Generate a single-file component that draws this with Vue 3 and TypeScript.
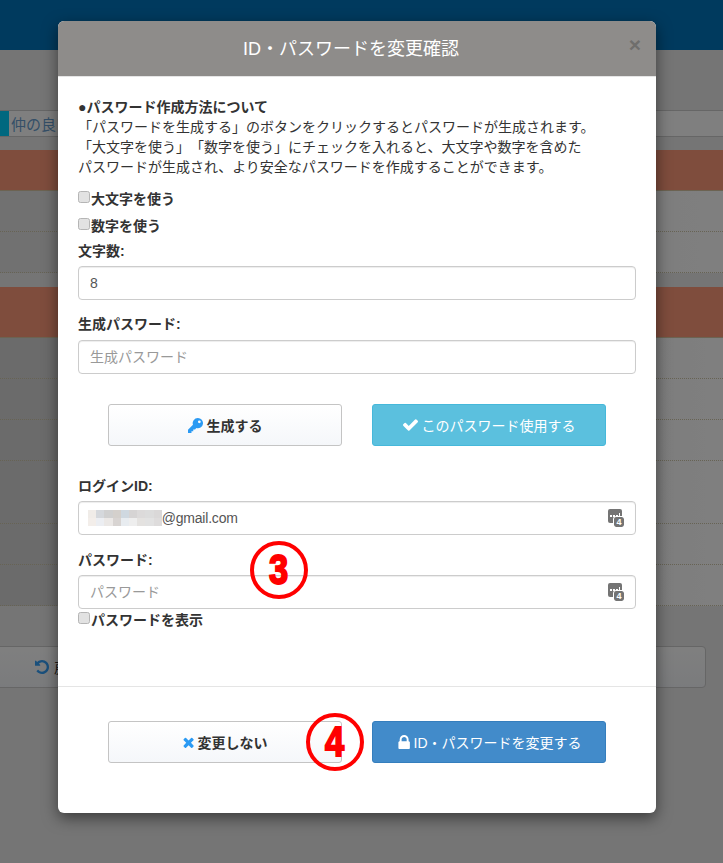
<script setup lang="ts">
const mosaic: string[] = [
  '#f0ece8','#d5d8dc','#d0d0d0','#d4d0cc','#cfd8e0','#d6d4d4','#dcdada','#dcdcdc','#dad8d8',
  '#f3eeea','#eceef2','#ebe8e6','#d8d4d2','#e8ecf0','#eeeeee','#e4e2e0','#e2e2e2','#dedcdc',
]
const rows = [41, 41]
const lowerRows = [41, 41, 41, 63, 41, 41]
const key = 'M10.5 0a5.5 5.5 0 1 1-1.6 10.76L7.5 12.2H5.6v1.9H3.7V16H0v-3.4l5.3-5.3A5.5 5.5 0 0 1 10.5 0zm1.6 2.6a1.5 1.5 0 1 0 0 3 1.5 1.5 0 0 0 0-3z'
const check = 'M1671 566q0 40-28 68l-724 724-136 136q-28 28-68 28t-68-28l-136-136-362-362q-28-28-28-68t28-68l136-136q28-28 68-28t68 28l294 295 656-657q28-28 68-28t68 28l136 136q28 28 28 68z'
const times = 'M1490 1322q0 40-28 68l-136 136q-28 28-68 28t-68-28l-294-294-294 294q-28 28-68 28t-68-28l-136-136q-28-28-28-68t28-68l294-294-294-294q-28-28-28-68t28-68l136-136q28-28 68-28t68 28l294 294 294-294q28-28 68-28t68 28l136 136q28 28 28 68t-28 68l-294 294 294 294q28 28 28 68z'
const lock = 'M640 768h512v-192q0-106-75-181t-181-75-181 75-75 181v192zm832 96v576q0 40-28 68t-68 28h-960q-40 0-68-28t-28-68v-576q0-40 28-68t68-28h32v-192q0-184 132-316t316-132 316 132 132 316v192h32q40 0 68 28t28 68z'
const undo = 'M1664 896q0 156-61 298t-164 245-245 164-298 61q-172 0-327-72.5t-264-204.5q-7-10-6.5-22.5t8.5-20.5l137-138q10-9 25-9 16 2 23 12 73 95 179 147t225 52q104 0 198.5-40.5t163.5-109.5 109.5-163.5 40.5-198.5-40.5-198.5-109.5-163.5-163.5-109.5-198.5-40.5q-98 0-188 35.5t-160 101.5l137 138q31 30 14 69-17 40-59 40h-448q-26 0-45-19t-19-45v-448q0-42 40-59 39-17 69 14l130 129q107-101 244.5-156.5t284.5-55.5q156 0 298 61t245 164 164 245 61 298z'
</script>

<template>
  <div class="page">
    <header class="topbar"></header>
    <main class="under">
      <div class="search">
        <span class="tab"></span>
        <span class="search-box">仲の良い</span>
      </div>
      <div class="band first"></div>
      <div v-for="(h, i) in rows" :key="'a' + i" class="row upper" :style="{ height: h + 'px' }"></div>
      <div class="band second"></div>
      <div v-for="(h, i) in lowerRows" :key="'b' + i" class="row lower" :style="{ height: h + 'px' }"></div>
      <div class="under-actions">
        <button class="under-btn">
          <svg class="undo" viewBox="128 128 1536 1536"><path :d="undo" /></svg>
          <span>戻る</span>
        </button>
      </div>
    </main>

    <div class="backdrop"></div>

    <section class="modal">
      <div class="modal-head">
        <h4>ID・パスワードを変更確認</h4>
        <span class="close">×</span>
      </div>

      <div class="modal-body">
        <div class="intro">
          <strong>●パスワード作成方法について</strong><br />
          「パスワードを生成する」のボタンをクリックするとパスワードが生成されます。<br />
          「大文字を使う」「数字を使う」にチェックを入れると、大文字や数字を含めた<br />
          パスワードが生成され、より安全なパスワードを作成することができます。
        </div>

        <label class="check first-check"><input type="checkbox" />大文字を使う</label>
        <label class="check second-check"><input type="checkbox" />数字を使う</label>

        <label class="label count-label">文字数:</label>
        <div class="field"><input class="input" type="text" value="8" /></div>

        <label class="label gen-label">生成パスワード:</label>
        <div class="field"><input class="input" type="text" placeholder="生成パスワード" /></div>

        <div class="actions gen-actions">
          <button class="btn plain">
            <svg class="ic key" viewBox="0 0 16 16"><path fill-rule="evenodd" :d="key" /></svg>
            生成する
          </button>
          <button class="btn info">
            <svg class="ic check-ic" viewBox="121 334 1550 1188"><path :d="check" /></svg>
            このパスワード使用する
          </button>
        </div>

        <label class="label id-label">ログインID:</label>
        <div class="field">
          <div class="input id-input">
            <span class="mosaic"><i v-for="(c, i) in mosaic" :key="i" :style="{ background: c }"></i></span><span class="mail">@gmail.com</span>
          </div>
          <span class="pm">
            <span class="pm-bubble"><i></i><i></i><i></i><i class="tall"></i></span>
            <span class="pm-badge">4</span>
          </span>
        </div>

        <label class="label pw-label">パスワード:</label>
        <div class="field">
          <input class="input" type="text" placeholder="パスワード" />
          <span class="pm">
            <span class="pm-bubble"><i></i><i></i><i></i><i class="tall"></i></span>
            <span class="pm-badge">4</span>
          </span>
        </div>
        <label class="check show-check"><input type="checkbox" />パスワードを表示</label>
      </div>

      <div class="modal-foot">
        <div class="actions">
          <button class="btn plain">
            <svg class="ic times-ic" viewBox="282 282 1208 1272"><path :d="times" /></svg>
            変更しない
          </button>
          <button class="btn primary">
            <svg class="ic lock-ic" viewBox="192 128 1280 1408"><path :d="lock" /></svg>
            ID・パスワードを変更する
          </button>
        </div>
      </div>
    </section>

    <div class="mark three"><span>3</span></div>
    <div class="mark four"><span>4</span></div>
  </div>
</template>

<style>
html, body { margin: 0; background: #ebebeb; }
</style>

<style scoped>
.page {
  position: relative;
  width: 723px;
  height: 863px;
  overflow: hidden;
  background: #ebebeb;
  font-family: "Liberation Sans", "Noto Sans CJK JP", sans-serif;
  font-size: 14px;
  color: #333;
  text-spacing-trim: space-all;
}
.topbar { height: 50px; background: #0075bd; }
.under { padding-top: 60px; }
.search {
  display: flex;
  height: 27px;
  margin-bottom: 13px;
  box-sizing: border-box;
  background: #fff;
  border-top: 1px solid #ccc;
  border-bottom: 1px solid #ccc;
}
.tab { width: 9px; background: #00d0ff; }
.search-box { padding-left: 2px; line-height: 27px; font-size: 15px; color: #6a9fd0; }
.band { box-sizing: border-box; background: #ff9b7a; border-bottom: 1px solid #d9c7a5; }
.band.first { height: 41px; }
.band.second { height: 51px; margin-top: 14px; }
.row { box-sizing: border-box; border-bottom: 1px dotted #cfc7a8; }
.row.upper { background: linear-gradient(90deg, #e2e2e2, #e2e2e2 60px, #fff); }
.row.lower { background: linear-gradient(90deg, #d6d6d6, #d6d6d6 60px, #fff); }
.row:last-of-type { border-bottom-style: solid; }
.under-actions { padding: 40px 17px 0 0; }
.under-btn {
  display: flex;
  align-items: center;
  width: calc(100% + 10px);
  height: 42px;
  margin-left: -10px;
  padding: 0 0 0 44px;
  box-sizing: border-box;
  background: linear-gradient(#fff, #f5f7fa);
  border: 1px solid #ccc;
  border-radius: 4px;
  font: inherit;
  color: #333;
}
.undo { width: 14px; height: 14px; fill: #34a0f8; margin-right: 5px; }
.backdrop { position: absolute; inset: 0; background: rgba(0, 0, 0, 0.5); }

.modal {
  position: absolute;
  left: 58px;
  top: 21px;
  width: 598px;
  height: 792px;
  display: flex;
  flex-direction: column;
  background: #fff;
  border-radius: 6px;
  box-shadow: 0 5px 15px rgba(0, 0, 0, 0.5);
  overflow: hidden;
}
.modal-head {
  position: relative;
  height: 55px;
  flex: none;
  display: flex;
  align-items: center;
  justify-content: center;
  padding: 2px 12px 0 0;
  box-sizing: content-box;
  height: 53px;
  background: #8e8c8a;
  border-bottom: 1px solid #e5e5e5;
}
.modal-head h4 { margin: 0; font-size: 18px; font-weight: 400; color: #fff; line-height: 1.1; }
.close {
  position: absolute;
  right: 15px;
  top: 12px;
  font-size: 21px;
  font-weight: 700;
  line-height: 1.1;
  color: #6f6e6c;
}
.modal-body { flex: 1; padding: 20px 20px 0; }
.intro { line-height: 20px; }
.intro strong, .label, .check { font-weight: 700; }
.check { display: flex; align-items: center; line-height: 20px; }
.check input {
  appearance: none;
  width: 12px;
  height: 12px;
  margin: 0 1px 4px 0;
  background: #e2e2e2;
  border: 1px solid #b5b5b5;
  border-radius: 2.5px;
  box-sizing: border-box;
}
.first-check { margin-top: 12px; }
.second-check { margin-top: 7px; }
.label { display: block; line-height: 20px; }
.count-label { margin-top: 5px; margin-bottom: 5px; }
.gen-label { margin-top: 14px; margin-bottom: 6px; }
.id-label { margin-top: 30px; margin-bottom: 5px; }
.pw-label { margin-top: 15px; margin-bottom: 5px; }
.field { position: relative; }
.input {
  display: block;
  width: 100%;
  height: 34px;
  padding: 6px 11px;
  box-sizing: border-box;
  border: 1px solid #ccc;
  border-radius: 4px;
  background: #fff;
  font: inherit;
  line-height: 20px;
  color: #555;
  box-shadow: inset 0 1px 1px rgba(0, 0, 0, 0.075);
}
.input::placeholder { color: #999; opacity: 1; }
.id-input { display: flex; align-items: center; padding-left: 9px; }
.mail { letter-spacing: -0.2px; }
.mosaic { display: grid; grid-template-columns: repeat(9, 8.2px); grid-auto-rows: 8px; }
.mosaic i { display: block; }
.pm { position: absolute; left: 530px; top: 8px; width: 16px; height: 18px; }
.pm-bubble {
  position: absolute;
  left: 0;
  top: 0;
  width: 14px;
  height: 14px;
  box-sizing: border-box;
  padding: 0 1px 6px;
  background: #747474;
  border-radius: 2px;
  display: flex;
  align-items: flex-end;
  justify-content: center;
  gap: 1px;
}
.pm-bubble i { width: 2px; height: 2px; background: #fff; }
.pm-bubble i.tall { width: 1px; height: 4px; }
.pm-badge {
  position: absolute;
  left: 6px;
  top: 8px;
  width: 10px;
  height: 10px;
  background: #747474;
  border-radius: 2px;
  outline: 1px solid #fff;
  color: #fff;
  font-size: 9px;
  font-weight: 700;
  line-height: 11px;
  text-align: center;
}
.show-check { margin-top: 1px; }
.actions { display: flex; justify-content: center; gap: 30px; }
.gen-actions { margin-top: 30px; }
.btn {
  width: 234px;
  height: 42px;
  display: flex;
  align-items: center;
  justify-content: center;
  gap: 4px;
  padding: 0;
  border: 1px solid #c4c4c4;
  border-radius: 3px;
  font: inherit;
  font-weight: 700;
}
.btn.plain { background: linear-gradient(#fff, #f5f7fa); color: #333; }
.btn.info { background: #5bc0de; border-color: #46b8da; color: #fff; font-weight: 400; }
.btn.primary { background: #428bca; border-color: #357ebd; color: #fff; font-weight: 400; }
.ic { fill: currentColor; flex: none; }
.plain .ic { fill: #2b9af3; }
.key { width: 15px; height: 15px; }
.check-ic { width: 15px; height: 12px; }
.times-ic { width: 11px; height: 11px; }
.lock-ic { width: 13px; height: 14px; }
.modal-foot {
  flex: none;
  height: 127px;
  box-sizing: border-box;
  padding-top: 34px;
  border-top: 1px solid #e5e5e5;
}
.mark {
  position: absolute;
  width: 58px;
  height: 58px;
  box-sizing: border-box;
  border: 4px solid #f00;
  border-radius: 50%;
  display: flex;
  align-items: center;
  justify-content: center;
  color: #f00;
  font-family: "Liberation Sans", sans-serif;
  font-weight: 700;
  font-size: 42px;
  line-height: 1;
  -webkit-text-stroke: 2px #f00;
}
.mark span { transform: scaleX(0.82); }
.mark.three { left: 250px; top: 541px; }
.mark.four { left: 306px; top: 713px; }
</style>
